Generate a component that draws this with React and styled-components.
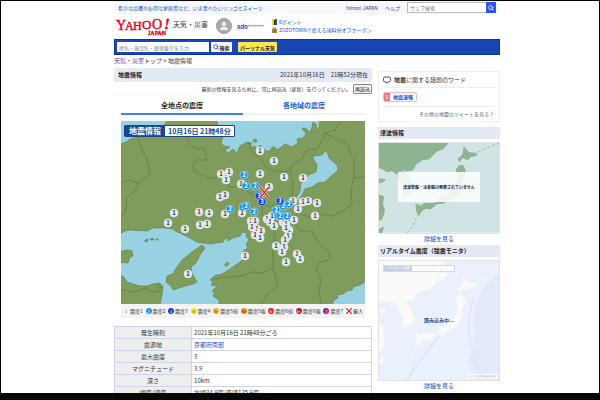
import React, { useState } from "react";
import styled, { createGlobalStyle } from "styled-components";
import { Search, ChevronRight } from "lucide-react";

const stations = [
  [260, 151], [274, 161], [260, 174], [284, 177], [303, 178], [221, 174], [229, 172], [226, 180],
  [220, 197], [225, 195], [241, 184], [269, 187], [174, 213], [199, 212], [209, 213], [225, 214],
  [242, 213], [168, 223], [185, 229], [200, 225], [207, 224], [293, 201], [303, 202], [308, 201],
  [317, 203], [298, 209], [315, 216], [294, 220], [251, 221], [255, 221], [252, 227], [257, 229],
  [255, 235], [261, 231], [260, 238], [267, 219], [272, 216], [270, 222], [274, 226], [283, 222],
  [286, 224], [289, 230], [286, 228], [288, 236], [285, 240], [276, 246], [284, 247], [282, 252],
  [297, 254], [300, 259], [286, 262], [245, 256], [188, 274],
  [244, 175, 2], [246, 186, 2], [255, 186, 2], [230, 209, 2], [243, 207, 2], [246, 206, 2], [254, 212, 2],
  [283, 206, 2], [289, 204, 2], [276, 210, 2], [278, 216, 2], [280, 216, 2], [287, 216, 2],
  [259, 196, 3], [262, 202, 3], [280, 201, 3],
];

const levels = {
  1: { fill: "#e2e5ea", text: "#333f55" },
  2: { fill: "#1a94f0", text: "#ffffff" },
  3: { fill: "#1440dd", text: "#ffffff" },
};

const legend = [
  { mark: "1", name: "震度1", color: "#f4f4f4", text: "#555555" },
  { mark: "2", name: "震度2", color: "#1a94f0", text: "#ffffff" },
  { mark: "3", name: "震度3", color: "#1440dd", text: "#ffffff" },
  { mark: "4", name: "震度4", color: "#f8e71c", text: "#333333" },
  { mark: "5-", name: "震度5弱", color: "#f5b31c", text: "#333333" },
  { mark: "5+", name: "震度5強", color: "#f08c14", text: "#333333" },
  { mark: "6-", name: "震度6弱", color: "#f02020", text: "#ffffff" },
  { mark: "6+", name: "震度6強", color: "#c0142c", text: "#ffffff" },
  { mark: "7", name: "震度7", color: "#b0148c", text: "#ffffff" },
];

const details = [
  { name: "発生時刻", value: "2021年10月16日 21時48分ごろ" },
  { name: "震源地", value: "京都府南部", link: true },
  { name: "最大震度", value: "3" },
  { name: "マグニチュード", value: "3.9" },
  { name: "深さ", value: "10km" },
  { name: "緯度/経度", value: "北緯34.9度/東経135.6度" },
];

const Logo = () => (
  <LogoSvg viewBox="0 0 56 18" role="img" aria-label="Yahoo! JAPAN">
    <g fill="#e60020" stroke="#e60020" strokeWidth="0.4" fontFamily="Liberation Serif, serif">
      <text x="0" y="12" fontSize="14">Y</text>
      <text x="9" y="12" fontSize="12">A</text>
      <text x="17" y="12" fontSize="12">H</text>
      <text x="26" y="11" fontSize="13">O</text>
      <text x="36" y="11" fontSize="14">O</text>
      <text x="48" y="11" fontSize="15" fontWeight="bold" fontStyle="italic">!</text>
      <text x="32" y="17" fontSize="6">JAPAN</text>
    </g>
  </LogoSvg>
);

const QuakeMap = () => (
  <MapSvg viewBox="121 121 244 183" role="img" aria-label="全地点の震度">
    <rect x="121" y="121" width="244" height="183" fill="#7f9c5c" />
    <g fill="#98d2e2" stroke="#607d45" strokeWidth="0.6">
      <path d="M120 120H168L160 130 145 135 130 139 126 142 120 144Z" />
      <path d="M216 120L220 129 223 137 221 143 224 146 230 147 225 150 228 153 233 149 237 153 240 146 247 142 252 143 250 148 255 146 257 150 260 145 263 148 266 151 270 151 272 147 275 147 277 150 281 147 285 144 292 147 298 143 297 139 303 138 306 134 302 128 307 129 310 133 312 127 313 122 316 124 317 132 319 127 320 120Z" />
      <path d="M327 151L329 158 337 165 338 170 335 173 330 177 325 182 318 183 312 187 305 189 302 195 298 202 296 198 300 192 301 183 305 181 308 175 316 172 317 165 313 158 314 156 322 155 324 152Z" />
      <path d="M120 234L125 231 130 230 147 231 153 228 165 228 173 229 175 231 180 233 188 237 197 242 210 244 223 242 226 237 228 241 233 238 240 236 242 232 247 233 246 236 249 240 246 244 248 248 243 251 245 257 240 262 230 269 222 274 214 276 210 280 213 281 211 285 217 286 212 291 215 293 213 296 219 300 219 305H160L162 295 163 287 159 286 160 283 153 284 147 286 140 286 127 282 124 277 120 275Z" />
      <path d="M366 281L360 285 353 287 352 290 347 291 343 294 337 295 338 298 334 300 332 305H366Z" />
    </g>
    <g fill="#7f9c5c" stroke="#607d45" strokeWidth="0.6">
      <path d="M202 245L205 248 200 255 196 263 191 267 192 273 197 282 193 284 185 286 179 288 173 290 171 286 166 282 167 276 173 274 175 270 182 260 192 252Z" />
      <path d="M120 252L126 250 132 251 133 256 130 257 128 263 120 262Z" />
      <path d="M145 240l3-1 0 2-3 1zM150 239l3-1 1 2-3 0zM156 239l2 0 0 1-2 0zM225 264l3-2 1 2-2 2-2 0zM156 285l5-1 2 3-4 1zM253 140l3-1 1 3-3 0z" />
    </g>
    <g fill="none" stroke="#607d45" strokeWidth="0.7">
      <path d="M138 137L142 150 146 157 149 165 150 174 144 178 139 183 130 180 121 183M139 183L136 190 127 197 126 210 121 217" />
      <path d="M187 136L190 144 197 149 204 148 207 160 195 160 193 165 195 172 206 176 211 179 217 176 226 183 232 188 240 185 248 192 254 195" />
      <path d="M248 142L252 152 258 156 267 168 276 171 284 172 290 170 294 163 301 160 305 152 311 149 317 149 322 141 325 133 335 130 341 121" />
      <path d="M325 133L338 140 342 143 344 140 349 147 350 153 355 157 354 165 354 178 351 190 352 204 343 211 332 216 320 214 311 217 302 215 297 211" />
      <path d="M290 170L293 182 292 195 297 211 295 222 300 231 312 231 316 239 319 244 329 251 331 259 319 263 316 270 321 279 319 290 321 304" />
      <path d="M254 195L262 203 262 213 270 224 275 233 273 247 273 268 276 278 278 287 269 292 261 304M273 268L262 273 252 272 242 276 227 277 214 279" />
      <path d="M354 178L365 177M121 289L133 292 146 288 153 292 161 291M258 203L270 207 283 200" />
    </g>
    {stations.map(([x, y, level = 1]) => (
      <g key={`${x}-${y}`}>
        <circle cx={x} cy={y} r="4" fill={levels[level].fill} stroke={level > 1 ? "#d7ecff" : "#eeeeee"} strokeWidth="0.5" />
        <text x={x} y={y + 2} textAnchor="middle" fontSize="6" fontWeight="bold" fill={levels[level].text}>
          {level}
        </text>
      </g>
    ))}
    <path d="M260 187l9 11M269 187l-9 11" stroke="#ffffff" strokeWidth="2.4" />
    <path d="M260 187l9 11M269 187l-9 11" stroke="#e01818" strokeWidth="1.2" />
  </MapSvg>
);

// shared outline for both small maps in the side column
const JapanShape = ({ land, coast }) => (
  <g>
    <path fill={coast} d="M0 0H69L64 6 57 9 50 16 43 17 37 21 34 27 28 28 24 27 17 31 13 28 8 29 5 27 0 25ZM0 35l7 1-3 3-4 1zM0 51l5 2-1 8 2 6-3 9-3 1zM0 85l5-2-2 7-3 1z" />
    <path fill={coast} d="M18 29l8-1 7 10 2 9-6 6-7 1 2-10-5-7z" />
    <path fill={land} d="M84 3L89 9 97 10 97 13 91 14 88 17 83 15 80 19 78 16 83 11zM79 22l5 0 2 6-3 7-1 9-4 9-9 4-5 3-7 1-6 5-4-1-5 3-3-2 7-6 11-1 5-7 6-2 7-6 3-9-2-8zM42 61l5-2 1 2-5 3zM36 60l6 2 0 7-3 4-2-5z" />
    <path fill="none" stroke={land} strokeWidth="0.8" strokeDasharray="3 2" d="M98 9L109 4 119 0M37 74L33 84 27 90" />
  </g>
);

const App = () => {
  const [tab, setTab] = useState("points");

  return (
    <Screen>
      <GlobalStyle />
      <Viewport>
        <Page>
          <TopBar>
            <TextLink href="#">希少な品種やお得な家庭用など、いま食べたいリンゴとスイーツ</TextLink>
            <TopLinks>
              <TextLink href="#" $visited>Yahoo! JAPAN</TextLink>
              <TextLink href="#">ヘルプ</TextLink>
              <WebSearch>
                <WebInput aria-label="ウェブ検索" placeholder="ウェブ検索" />
                <WebButton aria-label="検索"><Search size={6} strokeWidth={3} /></WebButton>
              </WebSearch>
            </TopLinks>
          </TopBar>

          <Masthead>
            <Brand href="#">
              <Logo />
              天気・災害
            </Brand>
            <User href="#">
              <svg width="16" height="16" viewBox="0 0 16 16">
                <circle cx="8" cy="8" r="7.5" fill="#aaaaaa" stroke="#999999" />
                <circle cx="8" cy="6" r="2.2" fill="#eeeeee" />
                <path d="M4 12Q4 8.8 8 8.8T12 12Z" fill="#eeeeee" />
              </svg>
              <span>xdo<Stars>********</Stars></span>
            </User>
            <Points>
              <PointLink href="#">
                <svg width="5" height="6" viewBox="0 0 5 6">
                  <path d="M0 0h2v6H0z" fill="#f5d800" />
                  <path d="M2 1h1v5H2z" fill="#222222" />
                  <path d="M3 0h2v6H3z" fill="#2b4d9b" />
                </svg>
                0ポイント
              </PointLink>
              <PointLink href="#">
                <svg width="5" height="6" viewBox="0 0 5 6">
                  <path d="M0 2h5v4H0z" fill="#a98548" />
                  <path d="M1 2V1h3v1M1 4h3" fill="none" stroke="#665030" strokeWidth="0.7" />
                </svg>
                ZOZOTOWNで使える送料分オフクーポン
              </PointLink>
            </Points>
          </Masthead>

          <SearchBar>
            <PlaceInput aria-label="地点検索" placeholder="地名・施設名・郵便番号を入力" />
            <SearchButton><Search size={6} strokeWidth={3} color="#1647b8" />検索</SearchButton>
            <PersonalButton>パーソナル天気</PersonalButton>
          </SearchBar>

          <Breadcrumb>
            <TextLink href="#" $visited>天気・災害トップ</TextLink> &gt; 地震情報
          </Breadcrumb>

          <Columns>
            <Main>
              <TitleBar>
                <Title>地震情報</Title>
                <span>2021年10月16日　21時52分現在</span>
              </TitleBar>
              <Notice>
                最新の情報を見るために、常に再読込（更新）を行ってください。
                <Reload>再読込</Reload>
              </Notice>
              <MapSection>
                <Tabs>
                  <Tab $active={tab === "points"} onClick={() => setTab("points")}>全地点の震度</Tab>
                  <Tab $active={tab === "areas"} onClick={() => setTab("areas")}>各地域の震度</Tab>
                </Tabs>
                <MapBox>
                  <QuakeMap />
                  <MapBanner>
                    <BannerName>地震情報</BannerName>
                    <BannerTime>10月16日 21時48分</BannerTime>
                  </MapBanner>
                </MapBox>
                <Legend>
                  {legend.map((item) => (
                    <LegendItem key={item.name}>
                      <Dot $color={item.color} $text={item.text}>{item.mark}</Dot>
                      {item.name}
                    </LegendItem>
                  ))}
                  <LegendItem>
                    <svg width="6" height="6" viewBox="0 0 6 6">
                      <path d="M0 0l6 6M6 0L0 6" stroke="#e01818" strokeWidth="1.1" />
                    </svg>
                    最大
                  </LegendItem>
                </Legend>
              </MapSection>
              <Details>
                <tbody>
                  {details.map((row) => (
                    <tr key={row.name}>
                      <HeadCell scope="row">{row.name}</HeadCell>
                      <Cell>{row.link ? <TextLink href="#">{row.value}</TextLink> : row.value}</Cell>
                    </tr>
                  ))}
                </tbody>
              </Details>
            </Main>

            <Side>
              <WordBox>
                <WordTitle>
                  <svg width="8" height="8" viewBox="0 0 8 8" fill="none" stroke="#444444" strokeWidth="0.9">
                    <path d="M2 1H6Q7.5 1 7.5 2.5V4.5Q7.5 6 6 6H5L4 7.2 3 6H2Q.5 6 .5 4.5V2.5Q.5 1 2 1Z" />
                  </svg>
                  <span><b>地震</b>に関する話題のワード</span>
                </WordTitle>
                <WordBody>
                  <Word href="#"><Rank>1</Rank><WordText>地震速報</WordText></Word>
                </WordBody>
                <MoreLink href="#">その他の地震のツイートを見る<ChevronRight size={6} /></MoreLink>
              </WordBox>

              <SideTitle>津波情報</SideTitle>
              <Picture>
                <MapSvg viewBox="0 0 119 89">
                  <rect width="119" height="89" fill="#d0e4e6" />
                  <JapanShape land="#8db38f" coast="#8db38f" />
                </MapSvg>
                <Message>津波警報・注意報は発表されていません</Message>
              </Picture>
              <DetailLink href="#">詳細を見る</DetailLink>

              <SideTitle>リアルタイム震度（強震モニタ）</SideTitle>
              <Picture>
                <MapSvg viewBox="0 0 119 118">
                  <rect width="119" height="118" fill="#eaf1fd" />
                  <path d="M119 10Q92 36 94 62T87 98L94 118H119Z" fill="#e3ebfa" />
                  <g transform="translate(0 12)">
                    <path d="M0 -12H66L50 10 28 28 0 28Z" fill="#fafaf8" />
                    <JapanShape land="#fafaf8" coast="#fafaf8" />
                  </g>
                  <path d="M94 36Q86 62 91 82T103 118M60 75Q43 92 28 118" fill="none" stroke="#dde5f6" strokeWidth="1.5" />
                  <rect x="88" y="112" width="29" height="5" fill="#ffffff" />
                  <text x="89" y="116" fontSize="3" fill="#b8b8b8">防災科学技術研究所</text>
                </MapSvg>
                <MonitorBanner>
                  <MonitorName>リアルタイム震度</MonitorName>
                  <MonitorTime>
                    <span>-</span><span>-</span><span>-</span><span>-</span><span>-</span>
                  </MonitorTime>
                </MonitorBanner>
                <Loading>読み込み中...</Loading>
              </Picture>
              <DetailLink href="#">詳細を見る</DetailLink>
            </Side>
          </Columns>
        </Page>
      </Viewport>
    </Screen>
  );
};

export default App;

const GlobalStyle = createGlobalStyle`
  * {
    box-sizing: border-box;
  }
  body {
    margin: 0;
    background: #ffffff;
    color: #333333;
    font-family: "Noto Sans CJK JP", sans-serif;
    font-size: 6px;
    line-height: 8px;
  }
  a {
    text-decoration: none;
  }
  button, input {
    font-family: inherit;
    margin: 0;
    padding: 0;
  }
  svg {
    flex: none;
  }
`;

const Screen = styled.div`
  height: 100vh;
  border: 1px solid #000000;
  border-bottom: 7px solid #080808;
`;

/* the page sits slightly right of centre */
const Viewport = styled.div`
  display: grid;
  grid-template-columns: 113fr 386fr 99fr;
  height: 100%;
  overflow: hidden;
`;

const Page = styled.div`
  grid-column: 2;
  min-width: 0;
`;

const TextLink = styled.a`
  color: ${({ $visited }) => ($visited ? "#551a9b" : "#0f50c8")};
`;

const TopBar = styled.div`
  display: flex;
  justify-content: space-between;
  align-items: center;
  height: 13px;
  padding: 0 4px;
  background: #f6f8fc;
  font-size: 5px;
  white-space: nowrap;
`;

const TopLinks = styled.div`
  display: flex;
  align-items: center;
  gap: 7px;
`;

const WebSearch = styled.div`
  display: flex;
  height: 11px;
`;

const WebInput = styled.input`
  width: 79px;
  padding: 0 2px;
  border: 1px solid #bbbbbb;
  border-right: 0;
  font-size: 5px;
  &::placeholder {
    color: #777777;
  }
`;

const WebButton = styled.button`
  display: flex;
  align-items: center;
  justify-content: center;
  width: 10px;
  border: 0;
  background: #2f55e8;
  color: #ffffff;
`;

const Masthead = styled.header`
  display: flex;
  align-items: flex-start;
  height: 25px;
  padding: 4px 2px 0;
`;

const Brand = styled.a`
  display: flex;
  gap: 1px;
  color: #333333;
  font-size: 7px;
  line-height: 12px;
  white-space: nowrap;
`;

const LogoSvg = styled.svg`
  width: 56px;
  height: 18px;
  overflow: visible;
`;

const User = styled.a`
  display: flex;
  align-items: center;
  gap: 5px;
  margin-left: 8px;
  color: #0f50c8;
  font-size: 6px;
  font-weight: 700;
`;

const Stars = styled.span`
  font-size: 4px;
  vertical-align: 1px;
`;

const Points = styled.div`
  display: flex;
  flex-direction: column;
  margin-left: 8px;
  font-size: 5px;
`;

const PointLink = styled.a`
  display: flex;
  align-items: center;
  gap: 2px;
  color: #0f50c8;
  white-space: nowrap;
`;

const SearchBar = styled.div`
  display: flex;
  align-items: center;
  gap: 2px;
  height: 16px;
  padding: 0 2px;
  background: #1647b4;
  border: 1px solid #0a34a4;
`;

const PlaceInput = styled.input`
  width: 92px;
  height: 10px;
  padding: 0 2px;
  border: 0;
  font-size: 5px;
  &::placeholder {
    color: #888888;
  }
`;

const SearchButton = styled.button`
  display: flex;
  align-items: center;
  justify-content: center;
  width: 21px;
  height: 10px;
  border: 0;
  border-radius: 1px;
  background: #f4f6fa;
  color: #222222;
  font-size: 5px;
  font-weight: 700;
`;

const PersonalButton = styled.button`
  width: 39px;
  height: 10px;
  margin-left: 4px;
  border: 0;
  border-radius: 1px;
  background: #ffe64d;
  color: #222222;
  font-size: 5px;
  font-weight: 700;
  white-space: nowrap;
`;

const Breadcrumb = styled.nav`
  padding: 2px 0 3px;
`;

const Columns = styled.div`
  display: flex;
  gap: 6px;
`;

const Main = styled.main`
  flex: 258;
  min-width: 0;
`;

const TitleBar = styled.div`
  display: flex;
  align-items: center;
  justify-content: space-between;
  height: 14px;
  padding: 0 4px;
  background: #e4e9f6;
`;

const Title = styled.h1`
  margin: 0;
  font-size: 6px;
  color: #222222;
`;

const Notice = styled.div`
  display: flex;
  align-items: center;
  justify-content: flex-end;
  gap: 2px;
  height: 14px;
  font-size: 5px;
`;

const Reload = styled.button`
  width: 19px;
  height: 10px;
  border: 1px solid #888888;
  border-radius: 1px;
  background: #f2f2f2;
  font-size: 5px;
  line-height: 8px;
`;

const MapSection = styled.section`
  padding: 0 7px 8px;
`;

const Tabs = styled.div`
  display: flex;
  margin-bottom: 6px;
`;

const Tab = styled.button`
  flex: 1;
  height: 19px;
  border: 0;
  border-bottom: 2px solid ${({ $active }) => ($active ? "#4080ee" : "#f2f4f8")};
  background: #ffffff;
  color: ${({ $active }) => ($active ? "#222222" : "#1560d8")};
  font-size: 7px;
  font-weight: 700;
`;

const MapBox = styled.div`
  position: relative;
`;

const MapSvg = styled.svg`
  display: block;
  width: 100%;
  height: auto;
`;

const MapBanner = styled.div`
  position: absolute;
  top: 4px;
  left: 3px;
  display: flex;
  height: 12px;
  border: 1px solid #164890;
  border-radius: 1px;
  background: #ffffff;
  font-weight: 700;
  line-height: 10px;
  white-space: nowrap;
`;

const BannerName = styled.div`
  padding: 0 4px;
  background: #164890;
  color: #ffffff;
  font-size: 8px;
`;

const BannerTime = styled.div`
  padding: 0 3px;
  color: #164890;
  font-size: 7px;
`;

const Legend = styled.div`
  display: flex;
  align-items: center;
  justify-content: space-between;
  height: 14px;
  padding: 0 2px;
  background: #f4f4f4;
`;

const LegendItem = styled.div`
  display: flex;
  align-items: center;
  gap: 1px;
  font-size: 5px;
  white-space: nowrap;
`;

const Dot = styled.span`
  width: 6px;
  height: 6px;
  border-radius: 50%;
  background: ${({ $color }) => $color};
  color: ${({ $text }) => $text};
  font-size: 4px;
  line-height: 6px;
  text-align: center;
`;

const Details = styled.table`
  width: 100%;
  border-collapse: collapse;
`;

const HeadCell = styled.th`
  width: 30%;
  padding: 2px 4px 1px;
  border: 1px solid #ccd7ee;
  background: #eeeeee;
  font-weight: 400;
`;

const Cell = styled.td`
  padding: 2px 2px 1px;
  border: 1px solid #ccd7ee;
`;

const Side = styled.aside`
  flex: 122;
  min-width: 0;
`;

const WordBox = styled.section`
  margin: 3px 0 5px;
  padding: 0 4px;
  border: 1px solid #eeeeee;
`;

const WordTitle = styled.div`
  display: flex;
  align-items: center;
  gap: 3px;
  height: 16px;
  border-bottom: 1px solid #eeeeee;
  white-space: nowrap;
`;

const WordBody = styled.div`
  display: flex;
  align-items: center;
  height: 19px;
  border-bottom: 1px solid #eeeeee;
`;

const Word = styled.a`
  display: flex;
  height: 10px;
  border: 1px solid #ffb8c0;
  border-radius: 2px;
  font-size: 5px;
  font-weight: 700;
  color: #0f50c8;
`;

const Rank = styled.span`
  width: 6px;
  background: #f8717e;
  color: #ffffff;
  text-align: center;
`;

const WordText = styled.span`
  padding: 0 3px;
`;

const MoreLink = styled.a`
  display: flex;
  align-items: center;
  justify-content: flex-end;
  height: 14px;
  color: #555f78;
  font-size: 5px;
  white-space: nowrap;
`;

const SideTitle = styled.h2`
  margin: 0 0 3px;
  padding: 2px;
  background: #e4e9f6;
  color: #222222;
  font-size: 6px;
  white-space: nowrap;
`;

const Picture = styled.div`
  position: relative;
  border: 1px solid #e2e2e2;
`;

const Message = styled.div`
  position: absolute;
  top: 32%;
  left: 16%;
  right: 16%;
  bottom: 34%;
  display: flex;
  align-items: center;
  justify-content: center;
  background: rgba(255, 255, 255, 0.85);
  color: #222222;
  font-size: 4px;
  font-weight: 700;
  white-space: nowrap;
`;

const MonitorBanner = styled.div`
  position: absolute;
  top: 4px;
  left: 4px;
  display: flex;
  width: 72px;
  border: 1px solid #d0daee;
  background: #ffffff;
  font-size: 3px;
  line-height: 5px;
`;

const MonitorName = styled.div`
  flex: 2;
  background: #c4d0e6;
  color: #ffffff;
  text-align: center;
`;

const MonitorTime = styled.div`
  flex: 3;
  display: flex;
  justify-content: space-evenly;
  color: #99a8c4;
  font-size: 5px;
`;

const Loading = styled.div`
  position: absolute;
  inset: 0;
  display: flex;
  align-items: center;
  justify-content: center;
  color: #164890;
  font-size: 5px;
  font-weight: 700;
`;

const DetailLink = styled.a`
  display: block;
  padding: 1px 0 2px;
  color: #0f50c8;
  font-size: 6px;
  text-align: center;
`;
